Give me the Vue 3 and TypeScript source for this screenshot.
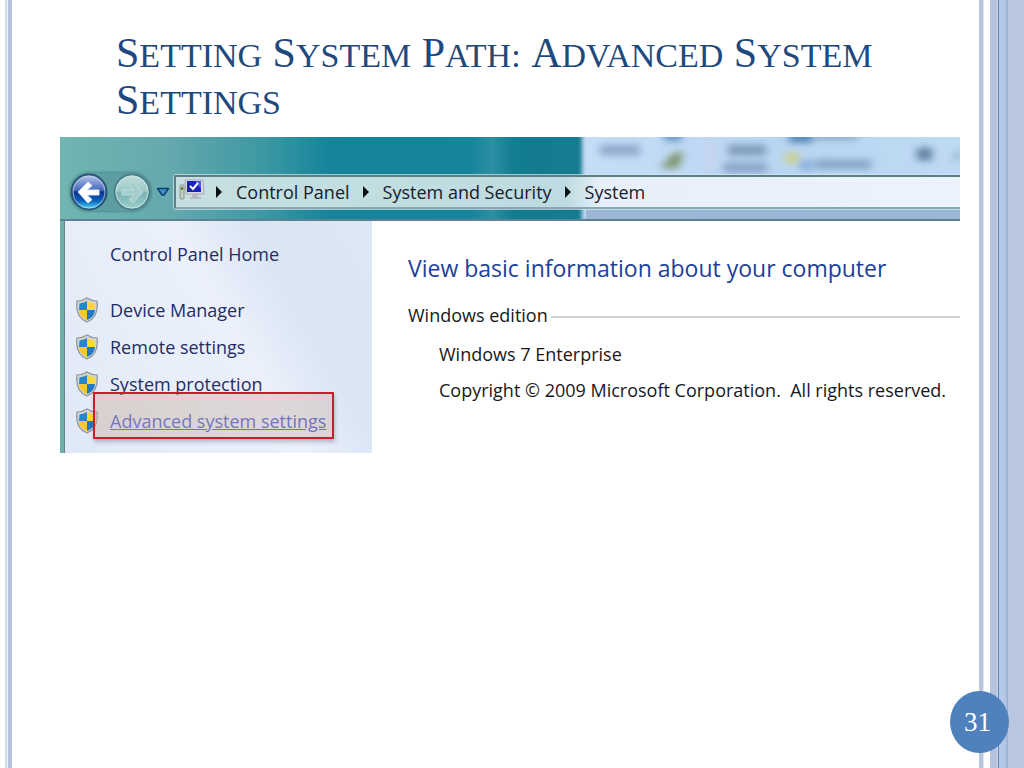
<script setup lang="ts">
const titleWords: string[] = ['Setting', 'System', 'Path:', 'Advanced', 'System', 'Settings']
const crumbs: string[] = ['Control Panel', 'System and Security', 'System']

interface Task {
  label: string
  active: boolean
}

const tasks: Task[] = [
  { label: 'Device Manager', active: false },
  { label: 'Remote settings', active: false },
  { label: 'System protection', active: false },
  { label: 'Advanced system settings', active: true },
]
</script>

<template>
  <div class="slide">
    <div class="rail rail-left"></div>
    <main class="body">
      <h1 class="title">
        <template v-for="(word, i) in titleWords" :key="i"><span class="word">{{ word }}</span>{{ ' ' }}</template>
      </h1>

      <section class="window">
        <header class="glass">
          <svg class="backdrop" viewBox="0 0 900 84" preserveAspectRatio="none" aria-hidden="true">
            <defs>
              <linearGradient id="teal" x1="0" x2="1" y1="0" y2="0">
                <stop offset="0" stop-color="#70b5b0" />
                <stop offset=".2" stop-color="#66a9ae" />
                <stop offset=".38" stop-color="#3c98a3" />
                <stop offset=".5" stop-color="#15849a" />
                <stop offset=".76" stop-color="#15859b" />
                <stop offset=".8" stop-color="#2d8fa3" />
                <stop offset=".84" stop-color="#127c91" />
                <stop offset="1" stop-color="#177b90" />
              </linearGradient>
              <linearGradient id="sky" x1="0" x2="1" y1="0" y2="0">
                <stop offset="0" stop-color="#c6ddf8" />
                <stop offset=".5" stop-color="#b9d6f2" />
                <stop offset="1" stop-color="#bfdaf4" />
              </linearGradient>
              <filter id="soft" x="-5%" y="-80%" width="110%" height="260%">
                <feGaussianBlur stdDeviation="4" />
              </filter>
              <filter id="edge" x="-5%" y="-20%" width="110%" height="140%">
                <feGaussianBlur stdDeviation="2" />
              </filter>
            </defs>
            <rect width="540" height="84" fill="url(#teal)" />
            <rect x="522" y="-8" width="400" height="100" fill="url(#sky)" filter="url(#edge)" />
            <g filter="url(#soft)">
              <rect x="540" y="8" width="40" height="11" fill="#8ea9cb" />
              <rect x="604" y="-8" width="18" height="12" fill="#5f91c2" />
              <path d="M600 32l14-16 10 0-6 16z" fill="#7f936a" />
              <rect x="645" y="2" width="10" height="32" fill="#c7d3ef" />
              <rect x="668" y="8" width="38" height="11" fill="#7f9aba" />
              <rect x="663" y="26" width="44" height="11" fill="#8aa5c9" />
              <rect x="729" y="-8" width="24" height="14" fill="#5588bb" />
              <rect x="756" y="-6" width="42" height="9" fill="#8da9c8" />
              <rect x="725" y="16" width="14" height="11" fill="#cbd28c" />
              <rect x="740" y="24" width="12" height="10" fill="#82a9dc" />
              <rect x="755" y="23" width="56" height="10" fill="#86a5c8" />
              <rect x="857" y="11" width="15" height="13" fill="#607f9f" />
              <path d="M900 10l-8 14h8z" fill="#8fa9c5" />
            </g>
            <rect x="526" y="71" width="374" height="13" fill="#8dabcb" opacity=".75" />
          </svg>

          <nav class="bar" aria-label="Address">
            <div class="travel">
              <button class="round" type="button" aria-label="Back">
                <svg viewBox="0 0 38 38" width="38" height="38">
                  <defs>
                    <linearGradient id="back" x1="0" x2="0" y1="0" y2="1">
                      <stop offset="0" stop-color="#bac8ec" />
                      <stop offset=".45" stop-color="#4669bd" />
                      <stop offset=".5" stop-color="#0a328d" />
                      <stop offset=".75" stop-color="#0b61bd" />
                      <stop offset="1" stop-color="#4fe3fa" />
                    </linearGradient>
                  </defs>
                  <circle cx="19" cy="19" r="17.5" fill="url(#back)" stroke="#2d5277" stroke-width="2" />
                  <circle cx="19" cy="19" r="16" fill="none" stroke="#c9e4ef" stroke-width="1" opacity=".7" />
                  <path d="M8 19l10-10 4 3.500-5 4.500H29v5H17l5 4.500-4 3.500z" fill="#fff" stroke="#e5eefa" stroke-width="1" stroke-linejoin="round" />
                </svg>
              </button>
              <button class="round" type="button" aria-label="Forward">
                <svg viewBox="0 0 38 38" width="38" height="38">
                  <defs>
                    <linearGradient id="fwd" x1="0" x2="0" y1="0" y2="1">
                      <stop offset="0" stop-color="#c1dfdd" />
                      <stop offset=".48" stop-color="#9ac8c8" />
                      <stop offset=".52" stop-color="#78b3b4" />
                      <stop offset="1" stop-color="#9fd0ce" />
                    </linearGradient>
                  </defs>
                  <circle cx="19" cy="19" r="17.5" fill="url(#fwd)" stroke="#4f7f86" stroke-width="2" />
                  <circle cx="19" cy="19" r="16" fill="none" stroke="#d5ebe9" stroke-width="1" opacity=".8" />
                  <path d="M30 19L20 9l-4 3.500 5 4.500H9v5h12l-5 4.500 4 3.500z" fill="#a6cecd" stroke="#bcdddb" stroke-width="1" stroke-linejoin="round" />
                </svg>
              </button>
            </div>
            <button class="recent" type="button" aria-label="Recent pages">
              <svg viewBox="0 0 14 10" width="14" height="10">
                <path d="M1.500 1.500h11L8 8H6z" fill="#3c94c4" stroke="#123f73" stroke-width="1.500" stroke-linejoin="round" />
              </svg>
            </button>
            <div class="address">
              <svg class="computer" viewBox="0 0 26 24" width="26" height="24" aria-hidden="true">
                <rect x="1" y="7" width="4" height="14" rx="1" fill="#c9cdbd" stroke="#8b9488" />
                <rect x="2" y="9" width="2" height="3" fill="#4d8b35" />
                <path d="M6 2h18l1 14H7z" fill="#d8d7e2" stroke="#aaaabb" />
                <rect x="8" y="3" width="14" height="11" fill="#1822bc" />
                <path d="M16 3h6v8z" fill="#4c5add" />
                <path d="M11 8l3 3 5-6" fill="none" stroke="#fff" stroke-width="2" />
                <path d="M13 16h6v3h3v2H11v-2h2z" fill="#b9b8c5" />
              </svg>
              <template v-for="crumb in crumbs" :key="crumb">
                <svg class="chevron" viewBox="0 0 6 12" width="6" height="12" aria-hidden="true">
                  <path d="M0 0l6 6-6 6z" fill="#0b0f14" />
                </svg>
                <button class="crumb" type="button">{{ crumb }}</button>
              </template>
            </div>
          </nav>
        </header>

        <div class="panes">
          <aside class="side">
            <a class="home" href="#">Control Panel Home</a>
            <ul class="tasks">
              <li v-for="task in tasks" :key="task.label" class="task">
                <svg class="shield" viewBox="0 0 24 26" width="24" height="26" aria-hidden="true">
                  <path d="M12 1C9 3 5 4 2 4c-1 8 0 17 10 21C22 21 23 12 22 4 19 4 15 3 12 1z" fill="#d3d5d0" stroke="#8c9298" stroke-width="1.200" />
                  <path d="M12 4C9 5.500 7 6 4.500 6.500L4 13h8z" fill="#2585d2" />
                  <path d="M12 4c3 1.500 5 2 7.500 2.500L20 13h-8z" fill="#fbd932" />
                  <path d="M4 13c.5 5 3 8 8 10V13z" fill="#f6cb25" />
                  <path d="M20 13c-.5 5-3 8-8 10V13z" fill="#2078c6" />
                </svg>
                <a href="#" :class="['link', { active: task.active }]">{{ task.label }}</a>
                <span v-if="task.active" class="marker"></span>
              </li>
            </ul>
          </aside>
          <article class="info">
            <h2 class="heading">View basic information about your computer</h2>
            <h3 class="group">Windows edition</h3>
            <p class="line">Windows 7 Enterprise</p>
            <p class="line">Copyright © 2009 Microsoft Corporation.&nbsp; All rights reserved.</p>
          </article>
        </div>
      </section>
    </main>
    <div class="rail rail-right"></div>
    <div class="page">31</div>
  </div>
</template>

<style>
body {
  margin: 0;
  background: #fff;
}
</style>

<style scoped>
.slide {
  position: relative;
  display: grid;
  grid-template-columns: 12px minmax(0, 1fr) 45px;
  min-height: 100vh;
  background: #fff;
}
.rail-left {
  background: linear-gradient(90deg, #fff 5px, #d2ddee 5px 7px, #eef3fb 7px 8px, #b5c1df 8px 12px);
}
.rail-right {
  background: linear-gradient(90deg, #b9c4de 0 4px, #e0e8f4 4px 5px, #fff 5px 11px, #b7c2dc 11px 18px, #c8d6ec 18px 19px, #5d86b8 19px 20px, #b5c8e7 20px 26px, #adc0e0 26px 28px, #98aed4 28px 29px, #bac7e1 29px);
}
.body {
  padding: 30px 19px 0 48px;
}
.title {
  margin: 0;
  padding: 0 40px 0 56px;
  font: 400 42px/47px "Liberation Serif", serif;
  color: #1f497d;
}
.word {
  display: inline-block;
  font-size: 34px;
  line-height: 40px;
  text-transform: uppercase;
}
.word::first-letter {
  font-size: 42px;
}
.window {
  margin-top: 13px;
  overflow: hidden;
  font: 18px/24px "Open Sans", "Noto Sans", sans-serif;
}
.glass {
  position: relative;
  box-sizing: border-box;
  height: 84px;
  padding-top: 36px;
  border-bottom: 2px solid #5d8190;
}
.backdrop {
  position: absolute;
  inset: 0;
  width: 100%;
  height: 100%;
}
.bar {
  position: relative;
  display: flex;
  align-items: center;
  height: 38px;
  padding-left: 10px;
}
.travel {
  display: flex;
  gap: 5px;
  border-radius: 20px;
  background: rgba(60, 120, 128, 0.3);
  box-shadow: 0 0 2px 1px rgba(45, 105, 115, 0.5);
}
button {
  padding: 0;
  border: 0;
  background: none;
  font: inherit;
  color: inherit;
}
.round,
.recent {
  display: flex;
}
.recent {
  margin: 0 4px 0 5px;
}
.address {
  flex: 1;
  display: flex;
  align-items: center;
  box-sizing: border-box;
  height: 34px;
  padding-left: 3px;
  border: 2px solid #5f7c87;
  border-right: 0;
  border-bottom-color: #8aa7b3;
  border-radius: 2px 0 0 2px;
  background: linear-gradient(90deg, #c6e0e1 0, #bddbe0 390px, #e7effa 425px, #edf3fc 100%);
  box-shadow: 0 0 0 1px rgba(210, 232, 236, 0.7);
  color: #16202a;
}
.computer {
  margin-bottom: 4px;
}
.chevron {
  margin: 0 14px 0 13px;
}
.computer + .chevron {
  margin-left: 11px;
}
.panes {
  display: grid;
  grid-template-columns: 308px minmax(0, 1fr);
  min-height: 232px;
  border-left: 4px solid #6fb0a9;
}
.side {
  box-sizing: border-box;
  padding: 21px 0 0 12px;
  border-left: 1px solid #60858d;
  background: linear-gradient(60deg, #dfe8f6 0, #e8effa 35%, #ebf0fb 55%, #dae5f4 72%, #dde8f5 100%);
  color: #252c63;
}
.home {
  display: block;
  margin-left: 33px;
  color: inherit;
  text-decoration: none;
}
.tasks {
  margin: 25px 0 0;
  padding: 0;
  list-style: none;
}
.task {
  position: relative;
  display: flex;
  align-items: center;
  gap: 11px;
  height: 37px;
  margin-left: -2px;
}
.link {
  color: inherit;
  text-decoration: none;
  white-space: nowrap;
}
.link.active {
  color: #2f49d0;
  text-decoration: underline;
}
.marker {
  position: absolute;
  box-sizing: border-box;
  top: -10px;
  left: 18px;
  width: 241px;
  height: 47px;
  border: 2px solid #c4202a;
  background: linear-gradient(90deg, rgba(203, 178, 160, 0.45), rgba(203, 178, 168, 0.4));
  box-shadow: 1px 3px 4px rgba(60, 60, 90, 0.3);
}
.info {
  padding: 32px 0 0 36px;
  color: #17181c;
}
.heading {
  margin: 0;
  font-size: 23px;
  line-height: 30px;
  font-weight: 400;
  color: #1d3f9b;
}
.group {
  display: flex;
  align-items: center;
  gap: 3px;
  margin: 20px 0 9px;
  font-size: 18px;
  line-height: 24px;
  font-weight: 400;
}
.group::after {
  content: "";
  flex: 1;
  height: 2px;
  margin-top: 4px;
  background: #d5d5d5;
}
.line {
  margin: 0 0 0 31px;
  line-height: 36px;
}
.page {
  position: absolute;
  right: 15px;
  bottom: 15px;
  display: grid;
  place-items: center;
  box-sizing: border-box;
  width: 59px;
  height: 62px;
  padding-right: 4px;
  border-radius: 50%;
  background: #4f81bd;
  color: #fff;
  font: 27px/30px "Liberation Serif", serif;
}
</style>
